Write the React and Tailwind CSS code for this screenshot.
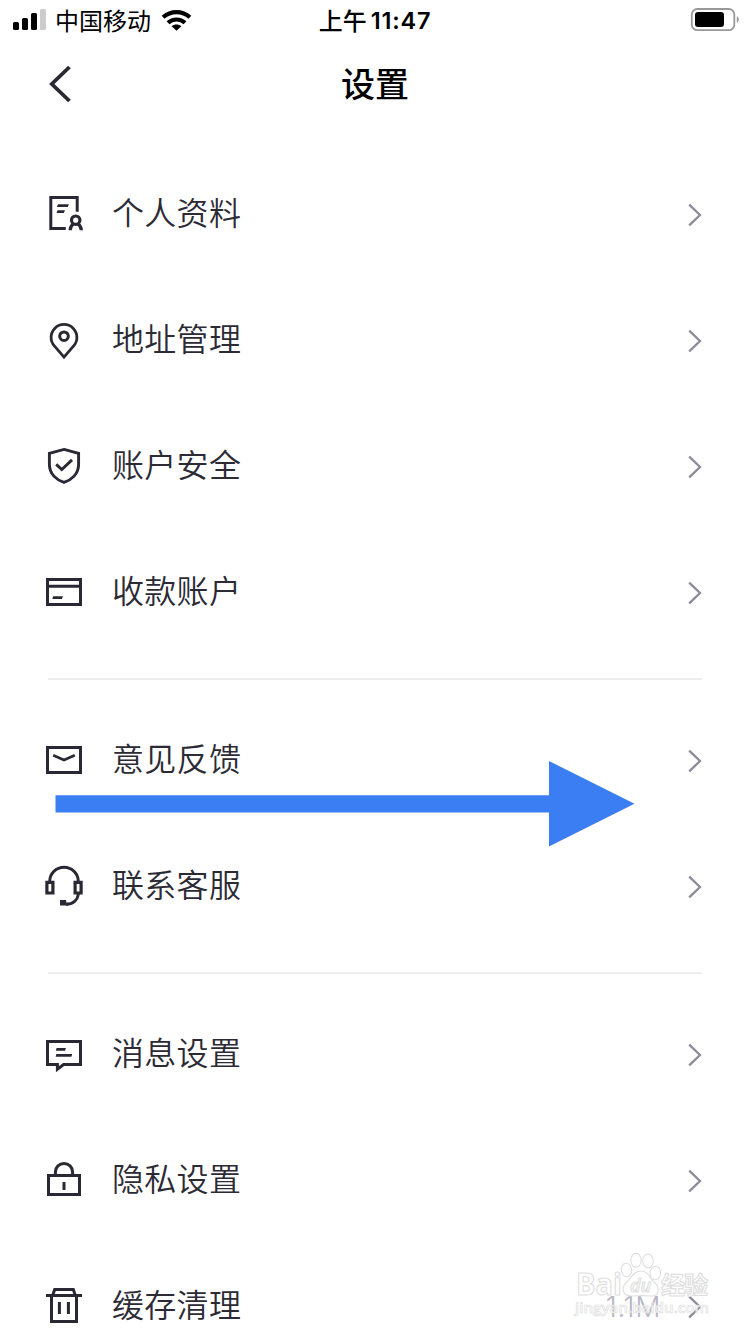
const icons = {
  profile: (
    <>
      <path d="M35.2 19.8V5.4H8.8V36.5H23.8" strokeWidth="3" />
      <path d="M16 12.2H26.9L25.8 15H14.9Z M15.6 18.2H23L21.9 21H14.5Z" fill="currentColor" stroke="none" />
      <circle cx="33.7" cy="28.2" r="4.2" strokeWidth="3.2" />
      <path d="M28.2 38.2C28.3 35.4 29.3 33.2 31.4 31.8M39.3 38.2C39.2 35.4 38.1 33.2 36 31.8" strokeWidth="3.2" />
    </>
  ),
  pin: (
    <>
      <path d="M22 39.2L12.6 28.2A12.9 12.9 0 1 1 31.4 28.2Z" strokeWidth="2.8" />
      <circle cx="22" cy="18.2" r="4.3" strokeWidth="3" />
    </>
  ),
  shield: (
    <>
      <path d="M22 5.4L36.6 9.3V20.5C36.6 30 29.5 36 22 38.4C14.5 36 7.4 30 7.4 20.5V9.3Z" strokeWidth="2.9" />
      <path d="M14.2 20.4L19.8 25.6L30 15.9" strokeWidth="2.9" />
    </>
  ),
  card: (
    <>
      <path d="M5.5 9.5H38.5V34.5H5.5ZM5.5 16.3H38.5" strokeWidth="3" />
      <path d="M11.2 26.2H20.9L20 29H10.3Z" fill="currentColor" stroke="none" />
    </>
  ),
  mail: (
    <>
      <path d="M5.5 9.5H38.5V34.5H5.5Z" strokeWidth="3" />
      <path d="M11.2 17.3L22 22L32.8 17.3" strokeWidth="2.6" />
    </>
  ),
  headset: (
    <>
      <path d="M7.7 18V17.5A14.3 14.3 0 0 1 36.3 17.5V18M36.3 30C35.8 36 31 40.2 24 40.2" strokeWidth="2.9" />
      <path d="M4.9 18.4H10.9V29H4.9ZM33.1 18.4H39.1V29H33.1Z" strokeWidth="3.2" />
      <path d="M18 36H24.2V38.8H26.5V41.6H18Z" fill="currentColor" stroke="none" />
    </>
  ),
  message: (
    <>
      <path d="M5.5 9.5H38.5V32.6H21.6L15.4 37.2V32.6H5.5Z" strokeWidth="3" />
      <path d="M14.6 16H23.9L23.1 18.7H13.8ZM14.4 22H30.2L29.4 24.7H13.6Z" fill="currentColor" stroke="none" />
    </>
  ),
  lock: (
    <>
      <path d="M6.5 17.5H37.5V36.5H6.5Z" strokeWidth="3" />
      <path d="M13.4 17V14A8.6 8.6 0 0 1 30.6 14V17" strokeWidth="3" />
      <path d="M22 24V32" strokeWidth="3" />
    </>
  ),
  trash: (
    <>
      <path d="M4 11.4H40M9.5 11.5V37.4H34.5V11.5" strokeWidth="3" />
      <path d="M10.8 11L12.7 5.6H31.3L33.2 11M17.4 18V30M26.4 18V30" strokeWidth="3" />
    </>
  ),
};

const groups = [
  [
    ["profile", "个人资料"],
    ["pin", "地址管理"],
    ["shield", "账户安全"],
    ["card", "收款账户"],
  ],
  [
    ["mail", "意见反馈"],
    ["headset", "联系客服"],
  ],
  [
    ["message", "消息设置"],
    ["lock", "隐私设置"],
    ["trash", "缓存清理", "1.1M"],
  ],
];

function Row({ icon, label, value }) {
  return (
    <li className="flex h-[126px] shrink-0 items-center pr-[46px] pl-[42px]">
      <svg className="size-11 shrink-0 text-[#292833]" viewBox="0 0 44 44" fill="none" stroke="currentColor">
        {icons[icon]}
      </svg>
      <span className="mb-[6px] ml-[26px] text-[32px] leading-[46px] font-[350] tracking-[0.3px] text-[#2c2a35]">
        {label}
      </span>
      {value && (
        <span className="mt-[2px] ml-auto font-['Inter'] text-[28px] font-light tracking-[0.6px] text-[#b7b5c4]">
          {value}
        </span>
      )}
      <svg
        className={`${value ? "ml-[27px]" : "ml-auto"} mt-[2px] h-6 w-4 shrink-0`}
        viewBox="0 0 16 24"
        fill="none"
        stroke="#8d8b99"
        strokeWidth="2.3"
      >
        <path d="M1.2 1.6L12 12L1.2 22.4" />
      </svg>
    </li>
  );
}

function StatusBar() {
  return (
    <div className="grid h-10 shrink-0 grid-cols-3 items-center">
      <div className="flex items-center pl-[13px]">
        <svg className="h-6 w-[34px]" viewBox="0 0 34 24">
          <rect x="0" y="14" width="6" height="8" rx="1.5" />
          <rect x="9" y="10" width="6" height="12" rx="1.5" />
          <rect x="18" y="5" width="6" height="17" rx="1.5" />
          <rect x="27" y="1" width="6" height="21" rx="1.5" fill="#cccccc" />
        </svg>
        <span className="mb-[1px] ml-[8px] text-[24px] leading-9">中国移动</span>
        <svg className="ml-[10px] h-[24px] w-[32px]" viewBox="0 0 32 24" fill="none" stroke="#000" strokeWidth="4.2">
          <path d="M2.1 9.2A20 20 0 0 1 28.9 9.2" />
          <path d="M7 14.8A12.6 12.6 0 0 1 24 14.8" />
          <path d="M15.5 22.8L10.6 18.2C13.2 15.9 17.8 15.9 20.4 18.2Z" fill="#000" stroke="none" />
        </svg>
      </div>
      <div className="flex items-center justify-center text-[24px] leading-9 font-medium">
        <span className="mb-[1px]">上午</span>
        <span className="mt-[1px] ml-[4px] font-['Inter'] text-[23.5px] font-semibold tracking-[0.8px]">11:47</span>
      </div>
      <div className="flex justify-end pr-[10px]">
        <svg className="h-6 w-[50px]" viewBox="0 0 50 24">
          <rect x="1.8" y="1" width="42.5" height="21.2" rx="5.5" fill="none" stroke="#999" strokeWidth="1.8" />
          <rect x="5" y="4" width="29" height="15" rx="3" />
          <path d="M46.8 8.3C49.4 9.5 49.4 13.7 46.8 15Z" fill="#999" />
        </svg>
      </div>
    </div>
  );
}

function Watermark() {
  return (
    <svg
      className="absolute top-[1248px] left-[570px] h-[76px] w-[146px]"
      viewBox="0 0 146 76"
      fill="#fff"
      fillOpacity="0.6"
      stroke="#dedede"
      strokeWidth="1.1"
      fontFamily="'Open Sans', sans-serif"
    >
      <text x="6" y="47" fontSize="30" fontWeight="700" textLength="46" lengthAdjust="spacingAndGlyphs">Bai</text>
      <text x="91" y="45.5" fontSize="24" fontWeight="700" textLength="47" fontFamily="'Noto Sans CJK SC', sans-serif">
        经验
      </text>
      <ellipse cx="56.5" cy="22" rx="5.2" ry="6.8" transform="rotate(-8 56.5 22)" />
      <ellipse cx="66" cy="12.3" rx="5.2" ry="7" />
      <ellipse cx="78" cy="13" rx="5.2" ry="7" />
      <ellipse cx="85.3" cy="25" rx="5.2" ry="6.8" transform="rotate(8 85.3 25)" />
      <path d="M71 23C64 23 62 29 57 34C50 40 53 48 61 48C67 48 74 47 80 48C90 49 90 39 84 34C79 29 78 23 71 23Z" />
      <text
        x="60"
        y="44"
        fontSize="18"
        fontWeight="600"
        fontStyle="italic"
        textLength="21"
        lengthAdjust="spacingAndGlyphs"
      >
        du
      </text>
      <text
        x="5"
        y="65"
        fontSize="15"
        fontWeight="600"
        textLength="134"
        lengthAdjust="spacingAndGlyphs"
        fillOpacity="0.75"
        strokeWidth="0.7"
      >
        jingyan.baidu.com
      </text>
    </svg>
  );
}

export default function App() {
  return (
    <div className="relative flex h-[1334px] w-[750px] flex-col overflow-hidden bg-white font-['Noto_Sans_CJK_SC',sans-serif] text-black">
      <StatusBar />
      <header className="grid h-[88px] shrink-0 grid-cols-3 items-center">
        <svg className="ml-[46px] h-10 w-7" viewBox="0 0 28 40" fill="none" stroke="#292833" strokeWidth="3.8">
          <path d="M23.5 3L5.8 20L23.5 37" />
        </svg>
        <h1 className="mb-[2px] text-center text-[34px] leading-[48px] font-medium">设置</h1>
      </header>
      <main className="flex shrink-0 flex-col pt-[23px]">
        {groups.map((rows, i) => (
          <section key={i} className="shrink-0">
            {i > 0 && <hr className="mx-12 mt-[23px] mb-[17px] h-[2px] border-0 bg-[#eeeeef]" />}
            <ul>
              {rows.map(([icon, label, value]) => (
                <Row key={label} icon={icon} label={label} value={value} />
              ))}
            </ul>
          </section>
        ))}
      </main>
      <svg className="absolute top-[760px] left-[55px] h-[88px] w-[581px]" viewBox="0 0 581 88" fill="#3b7df2">
        <path d="M.5 35.2H494V1L579.5 43.8L494 86.5V52.5H.5Z" />
      </svg>
      <Watermark />
    </div>
  );
}
